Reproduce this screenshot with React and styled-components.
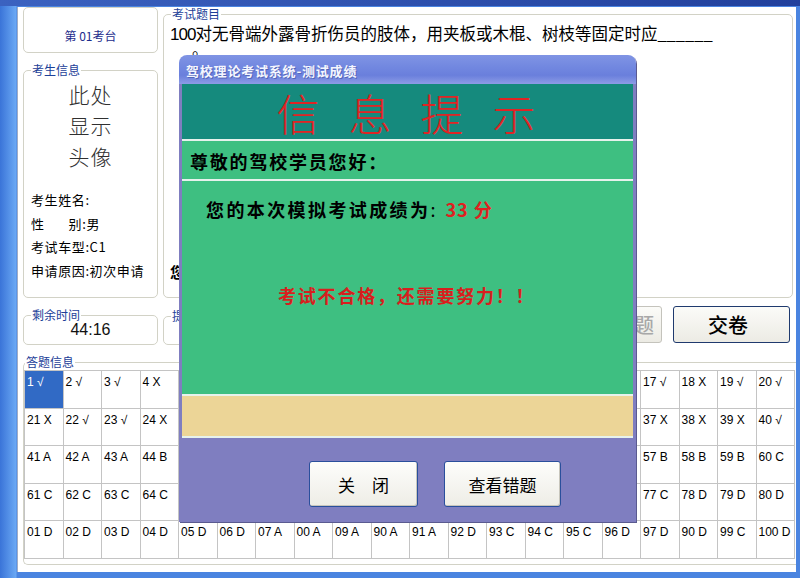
import React from "react";
import styled, { createGlobalStyle } from "styled-components";

const Global = createGlobalStyle`
  html, body { margin: 0; padding: 0; background: #4a86e0; }
  * { box-sizing: border-box; }
`;

const cjk = `"Noto Sans CJK SC", "Liberation Sans", sans-serif`;

const answers = [
  ["1 √", "2 √", "3 √", "4 X", "5 √", "6 X", "7 √", "8 √", "9 √", "10 X", "11 √", "12 √", "13 X", "14 √", "15 √", "16 X", "17 √", "18 X", "19 √", "20 √"],
  ["21 X", "22 √", "23 √", "24 X", "25 √", "26 √", "27 X", "28 √", "29 X", "30 √", "31 √", "32 X", "33 √", "34 √", "35 X", "36 √", "37 X", "38 X", "39 X", "40 √"],
  ["41 A", "42 A", "43 A", "44 B", "45 C", "46 B", "47 D", "48 A", "49 C", "50 B", "51 D", "52 A", "53 C", "54 B", "55 A", "56 D", "57 B", "58 B", "59 B", "60 C"],
  ["61 C", "62 C", "63 C", "64 C", "65 A", "66 B", "67 D", "68 C", "69 A", "70 B", "71 D", "72 C", "73 A", "74 B", "75 D", "76 A", "77 C", "78 D", "79 D", "80 D"],
  ["01 D", "02 D", "03 D", "04 D", "05 D", "06 D", "07 A", "00 A", "09 A", "90 A", "91 A", "92 D", "93 C", "94 C", "95 C", "96 D", "97 D", "90 D", "99 C", "100 D"],
];

export default function App() {
  return (
    <>
      <Global />
      <Window>
        <Panel>
          <TopRow>
            <LeftCol>
              <StationBox>第 01考台</StationBox>
              <Group>
                <Legend>考生信息</Legend>
                <Avatar>
                  <span>此处</span>
                  <span>显示</span>
                  <span>头像</span>
                </Avatar>
                <InfoList>
                  <li>考生姓名:</li>
                  <li>
                    性<Gap />别:男
                  </li>
                  <li>考试车型:C1</li>
                  <li>申请原因:初次申请</li>
                </InfoList>
              </Group>
            </LeftCol>
            <Group>
              <Legend>考试题目</Legend>
              <Question>
                <Num>100</Num>对无骨端外露骨折伤员的肢体，用夹板或木棍、树枝等固定时应______
              </Question>
              <QuestionTail>。</QuestionTail>
              <YourAnswer>您的答案：</YourAnswer>
            </Group>
          </TopRow>

          <MidRow>
            <TimeGroup>
              <Legend>剩余时间</Legend>
              <Time>44:16</Time>
            </TimeGroup>
            <Actions>
              <HintGroup>
                <Legend>提示</Legend>
              </HintGroup>
              <Button disabled $alignEnd>
                下一题
              </Button>
              <Button>交卷</Button>
            </Actions>
          </MidRow>

          <AnswerGroup>
            <Legend>答题信息</Legend>
            <Grid>
              {answers.flat().map((a, i) => (
                <Cell key={i} $active={i === 0}>
                  {a}
                </Cell>
              ))}
            </Grid>
          </AnswerGroup>
        </Panel>

        <Dialog>
          <TitleBar>驾校理论考试系统-测试成绩</TitleBar>
          <DialogBody>
            <Banner>信息提示</Banner>
            <Greeting>尊敬的驾校学员您好：</Greeting>
            <ScoreArea>
              <Score>
                您的本次模拟考试成绩为<Colon>:</Colon>
                <Red>33 分</Red>
              </Score>
              <Fail>考试不合格，还需要努力！！</Fail>
            </ScoreArea>
            <TanStrip />
            <ButtonBar>
              <DlgButton $w={109}>关　闭</DlgButton>
              <DlgButton $w={117}>查看错题</DlgButton>
            </ButtonBar>
          </DialogBody>
        </Dialog>
      </Window>
    </>
  );
}

const Window = styled.div`
  position: relative;
  width: 800px;
  height: 578px;
  padding: 7px 4px 6px 17px;
  background: linear-gradient(to right, #3a74d8 0, #6aa8f4 16px, #4a84e0 17px);
  &::before {
    content: "";
    position: absolute;
    left: 0;
    right: 0;
    top: 0;
    height: 6px;
    background: linear-gradient(to right, #3b62c0, #22409c);
  }
`;

const Panel = styled.div`
  height: 565px;
  background: #fff;
  border-left: 1px solid #a0acc4;
  padding: 0 3px 0 5px;
  display: flex;
  flex-direction: column;
`;

const TopRow = styled.div`
  display: grid;
  grid-template-columns: 135px 1fr;
  column-gap: 5px;
  height: 291px;
`;

const LeftCol = styled.div`
  display: flex;
  flex-direction: column;
  gap: 10px;
`;

const StationBox = styled.div`
  height: 46px;
  border: 1px solid #d2d2c6;
  border-radius: 5px;
  display: flex;
  align-items: center;
  justify-content: center;
  padding-top: 10px;
  font: 12px ${cjk};
  color: #1c2c8c;
`;

const Group = styled.fieldset`
  margin: 0;
  padding: 0 6px;
  min-width: 0;
  flex: 1;
  border: 1px solid #d2d2c6;
  border-radius: 5px;
`;

const Legend = styled.legend`
  margin-left: 1px;
  padding: 0 1px;
  font: 12px/14px ${cjk};
  color: #1c4098;
`;

const Avatar = styled.div`
  display: flex;
  flex-direction: column;
  align-items: center;
  margin-top: 2px;
  font: 300 21px/31px ${cjk};
  letter-spacing: 1px;
  color: #303030;
`;

const InfoList = styled.ul`
  list-style: none;
  margin: 16px 0 0;
  padding: 0 0 0 1px;
  font: 13px/23.5px ${cjk};
  letter-spacing: 0.6px;
  color: #000;
`;

const Gap = styled.span`
  display: inline-block;
  width: 24px;
`;

const Question = styled.div`
  margin-top: 1px;
  font: 16.5px/22px ${cjk};
  color: #000;
  white-space: nowrap;
`;

const Num = styled.span`
  font: 17px "Liberation Sans Narrow", "Liberation Sans", sans-serif;
  letter-spacing: -1px;
`;

const QuestionTail = styled.div`
  margin-top: -5px;
  padding-left: 22px;
  font: 16px/16px ${cjk};
`;

const YourAnswer = styled.div`
  margin-top: 205px;
  font: bold 15px ${cjk};
`;

const MidRow = styled.div`
  display: grid;
  grid-template-columns: 135px 1fr;
  column-gap: 5px;
  margin-top: 8px;
  height: 39px;
`;

const TimeGroup = styled(Group)`
  align-self: end;
  height: 37px;
  flex: none;
`;

const Time = styled.div`
  text-align: center;
  font: 16px/18px "Liberation Sans", sans-serif;
  color: #111;
  margin-top: -1px;
`;

const Actions = styled.div`
  display: flex;
  gap: 11px;
  padding-right: 3px;
`;

const HintGroup = styled(Group)`
  align-self: end;
  height: 36px;
  margin-right: -6px;
`;

const Button = styled.button`
  width: 117px;
  height: 37px;
  display: flex;
  align-items: center;
  justify-content: ${(p) => (p.$alignEnd ? "flex-end" : "center")};
  padding: 0 7px 0 0;
  background: linear-gradient(#fbfbf8, #ecebe4);
  border: 1px solid ${(p) => (p.disabled ? "#c4c3bc" : "#1f3a6e")};
  border-radius: 3px;
  font: 500 20px ${cjk};
  color: ${(p) => (p.disabled ? "#a8a8a8" : "#000")};
`;

const AnswerGroup = styled.fieldset`
  margin: 10px -3px 0 0;
  padding: 1px 0 0 0;
  height: 210px;
  min-width: 0;
  border: 1px solid #d2d2c6;
  border-right: 0;
  border-radius: 5px 0 0 5px;
`;

const Grid = styled.div`
  display: grid;
  grid-template-columns: repeat(20, 1fr);
  grid-auto-rows: 37.6px;
  width: 771px;
  border-top: 1px solid #c4c4c4;
  border-left: 1px solid #c4c4c4;
`;

const Cell = styled.div`
  border-right: 1px solid #c4c4c4;
  border-bottom: 1px solid #c4c4c4;
  padding: 4px 0 0 2px;
  font: 12px/14px "Liberation Sans", sans-serif;
  white-space: nowrap;
  background: ${(p) => (p.$active ? "#316ac5" : "#fff")};
  color: ${(p) => (p.$active ? "#fff" : "#000")};
`;

const Dialog = styled.div`
  position: absolute;
  left: 179px;
  top: 55px;
  width: 457px;
  height: 467px;
  display: flex;
  flex-direction: column;
  border-radius: 8px 8px 0 0;
  overflow: hidden;
  box-shadow: 1px 1px 0 #5a5a90;
`;

const TitleBar = styled.div`
  height: 29px;
  flex: none;
  padding: 6px 0 0 7px;
  background: linear-gradient(#8094e4, #7288e0 40%, #6a7fdc 70%, #8c9ce6);
  font: bold 13px ${cjk};
  letter-spacing: 0.8px;
  color: #f4f6ff;
  text-shadow: 1px 1px 0 #5566b8;
`;

const DialogBody = styled.div`
  flex: 1;
  display: flex;
  flex-direction: column;
  background: #7f7ec0;
  padding: 0 3px 2px;
`;

const Banner = styled.div`
  height: 57px;
  flex: none;
  background: #158a7d;
  border-bottom: 2px solid #e6f2ec;
  text-align: center;
  padding-left: 26px;
  font: 200 43px/56px ${cjk};
  letter-spacing: 29px;
  color: #e02424;
`;

const Greeting = styled.div`
  height: 40px;
  flex: none;
  background: #3ebf81;
  border-bottom: 2px solid #e6f2ec;
  padding: 7px 0 0 8px;
  font: bold 18px ${cjk};
  letter-spacing: 1.8px;
  color: #000;
`;

const ScoreArea = styled.div`
  height: 215px;
  flex: none;
  background: #3ebf81;
  border-bottom: 2px solid #e6f2ec;
  padding: 15px 0 0 24px;
`;

const Score = styled.div`
  font: bold 18px ${cjk};
  letter-spacing: 2.4px;
  color: #000;
`;

const Colon = styled.span`
  font-weight: normal;
  letter-spacing: 0;
`;

const Red = styled.span`
  margin-left: 10px;
  color: #e02020;
  font: bold 18px ${cjk};
  letter-spacing: 1px;
`;

const Fail = styled.div`
  margin: 60px 0 0 72px;
  font: bold 18px ${cjk};
  color: #d81e1e;
  letter-spacing: 1.8px;
`;

const TanStrip = styled.div`
  height: 42px;
  flex: none;
  background: #ecd597;
  border-bottom: 2px solid #e6f2ec;
`;

const ButtonBar = styled.div`
  flex: 1;
  display: flex;
  gap: 26px;
  padding: 23px 0 0 127px;
`;

const DlgButton = styled.button`
  width: ${(p) => p.$w}px;
  height: 46px;
  background: linear-gradient(#fdfdfb, #eeede6);
  border: 1px solid #2a4f9c;
  border-radius: 3px;
  box-shadow: inset -1px -1px 0 #c8c6bc;
  font: 17px ${cjk};
  color: #000;
`;
